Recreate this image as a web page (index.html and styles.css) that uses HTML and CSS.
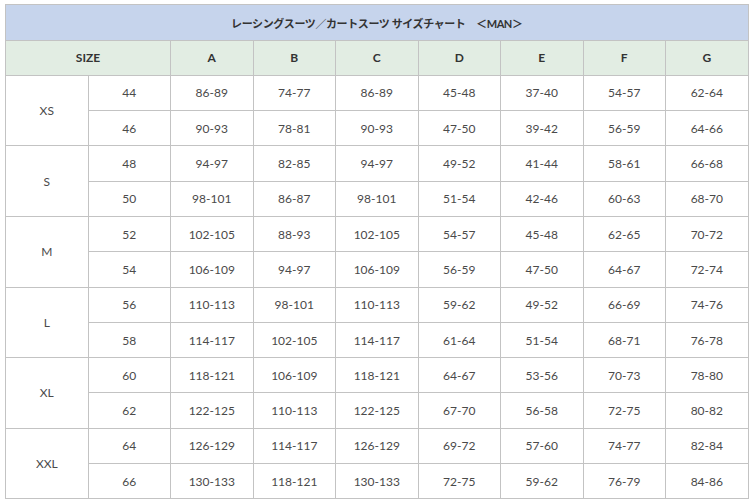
FILE: index.html
```html
<!DOCTYPE html>
<html lang="ja">
<head>
<meta charset="utf-8">
<link rel="stylesheet" href="styles.css">
</head>
<body>
<table class="chart">
  <colgroup>
    <col class="c"><col class="c"><col class="c"><col class="c"><col class="c"><col class="c"><col class="c"><col class="c"><col class="c">
  </colgroup>
  <thead>
    <tr class="title-row"><th colspan="9">レーシングスーツ／カートスーツ サイズチャート　＜MAN＞</th></tr>
    <tr class="head-row"><th colspan="2">SIZE</th><th>A</th><th>B</th><th>C</th><th>D</th><th>E</th><th>F</th><th>G</th></tr>
  </thead>
  <tbody>
    <tr><td rowspan="2">XS</td><td>44</td><td>86-89</td><td>74-77</td><td>86-89</td><td>45-48</td><td>37-40</td><td>54-57</td><td>62-64</td></tr>
    <tr><td>46</td><td>90-93</td><td>78-81</td><td>90-93</td><td>47-50</td><td>39-42</td><td>56-59</td><td>64-66</td></tr>
    <tr><td rowspan="2">S</td><td>48</td><td>94-97</td><td>82-85</td><td>94-97</td><td>49-52</td><td>41-44</td><td>58-61</td><td>66-68</td></tr>
    <tr><td>50</td><td>98-101</td><td>86-87</td><td>98-101</td><td>51-54</td><td>42-46</td><td>60-63</td><td>68-70</td></tr>
    <tr><td rowspan="2">M</td><td>52</td><td>102-105</td><td>88-93</td><td>102-105</td><td>54-57</td><td>45-48</td><td>62-65</td><td>70-72</td></tr>
    <tr><td>54</td><td>106-109</td><td>94-97</td><td>106-109</td><td>56-59</td><td>47-50</td><td>64-67</td><td>72-74</td></tr>
    <tr><td rowspan="2">L</td><td>56</td><td>110-113</td><td>98-101</td><td>110-113</td><td>59-62</td><td>49-52</td><td>66-69</td><td>74-76</td></tr>
    <tr><td>58</td><td>114-117</td><td>102-105</td><td>114-117</td><td>61-64</td><td>51-54</td><td>68-71</td><td>76-78</td></tr>
    <tr><td rowspan="2">XL</td><td>60</td><td>118-121</td><td>106-109</td><td>118-121</td><td>64-67</td><td>53-56</td><td>70-73</td><td>78-80</td></tr>
    <tr><td>62</td><td>122-125</td><td>110-113</td><td>122-125</td><td>67-70</td><td>56-58</td><td>72-75</td><td>80-82</td></tr>
    <tr><td rowspan="2">XXL</td><td>64</td><td>126-129</td><td>114-117</td><td>126-129</td><td>69-72</td><td>57-60</td><td>74-77</td><td>82-84</td></tr>
    <tr><td>66</td><td>130-133</td><td>118-121</td><td>130-133</td><td>72-75</td><td>59-62</td><td>76-79</td><td>84-86</td></tr>
  </tbody>
</table>
</body>
</html>
```
FILE: styles.css
```css
html, body {
  margin: 0;
  padding: 0;
  background: #ffffff;
}
body {
  padding: 4px 0 0 5px;
  font-family: Lato, "Noto Sans CJK JP", sans-serif;
  font-size: 12px;
  color: #4a4a4a;
}
.chart {
  border-collapse: collapse;
  table-layout: fixed;
  width: 743px;
}
.chart .c {
  width: 82.5px;
}
.chart th,
.chart td {
  border: 1px solid #c3c3c3;
  text-align: center;
  vertical-align: middle;
  padding: 0;
  height: 34px;
}
.title-row th {
  background: #c6d4ec;
  color: #333333;
  font-weight: bold;
  font-size: 11px;
  letter-spacing: -0.4px;
  height: 35px;
}
.head-row th {
  background: #e2ede3;
  color: #333333;
  font-weight: bold;
  height: 33.8px;
}
.chart tbody td {
  height: 34.3px;
}
```
